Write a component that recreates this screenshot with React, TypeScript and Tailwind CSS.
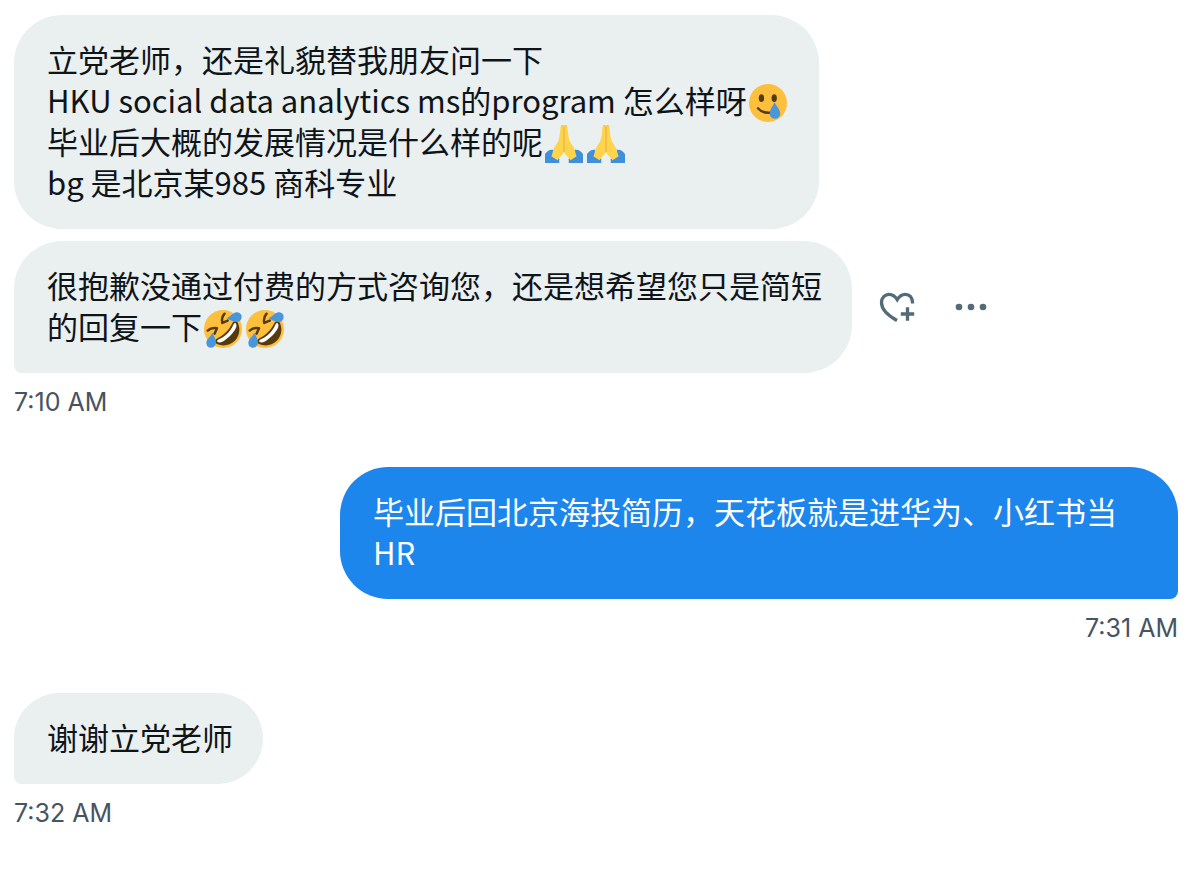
import type { ReactNode } from 'react';
import clsx from 'clsx';

// Negative block margin keeps an emoji from growing its line
const emojiClass = 'mx-[2px] -my-1 inline-block size-[38px] align-[-5px]';

// Smiling face with a tear
const TearSmile = () => (
  <svg viewBox="0 0 36 36" className={emojiClass} role="img" aria-label="🥲">
    <circle cx="18" cy="18" r="18" fill="#fdbf3c" />
    <ellipse cx="11.8" cy="13.4" rx="2.5" ry="3.6" fill="#553a10" />
    <ellipse cx="23.9" cy="13.4" rx="2.5" ry="3.6" fill="#553a10" />
    <path
      d="M8.5 23C11.500 26.500 15.500 27.800 21 27"
      fill="none"
      stroke="#553a10"
      strokeWidth="2.200"
      strokeLinecap="round"
    />
    <path
      d="M24.200 17C25.500 20.500 29.600 24 29.600 28A5 5 0 0 1 19.600 28C19.600 24 23 20.500 24.200 17Z"
      fill="#4a96dc"
    />
  </svg>
);

// Folded hands
const Hands = () => (
  <svg viewBox="0 0 36 36" className={emojiClass} role="img" aria-label="🙏">
    <path d="M0 36V27.500Q3.500 22.500 8 23.500L13.500 32.500V36Z" fill="#3f8fdc" />
    <path d="M36 36V27.500Q32.500 22.500 28 23.500L22.500 32.500V36Z" fill="#3f8fdc" />
    <path
      d="M18 1.200C17 -.3 14.900 .2 14.700 2C14.300 8 13.800 12.500 12.500 15.500L8.200 22.500C7 25 7.500 27 6 29.500L11.800 33.500C13.500 30.500 16.500 28.500 18 25.500C19.500 28.500 22.500 30.500 24.200 33.500L30 29.500C28.500 27 29 25 27.800 22.500L23.500 15.500C22.200 12.500 21.700 8 21.300 2C21.100 .2 19 -.3 18 1.200Z"
      fill="#fdd44b"
    />
    <path d="M18 2V25.500" stroke="#f2aa45" strokeWidth="1" />
    <path
      d="M16 .8h1.200M18.800 .8H20"
      stroke="#f2aa45"
      strokeWidth=".8"
      strokeLinecap="round"
    />
  </svg>
);

// Rolling on the floor laughing
const Rofl = () => (
  <svg viewBox="0 0 36 36" className={emojiClass} role="img" aria-label="🤣">
    <circle cx="18" cy="18" r="18" fill="#fdbf3c" />
    <path
      d="M10.500 31C10 28 12 27 15 25.500C19 23.500 23.500 19 25.500 15C27 12 28 10 31 10.500C34.500 15.500 34.800 23.500 29.200 29.200C23.500 34.800 15.500 34.500 10.500 31Z"
      fill="#553a10"
    />
    <path
      d="M12.500 30C12 28.500 14 27.800 16 26.800C20 24.800 24.800 20 26.800 16C27.800 14 28.500 12 30 12.500C31.500 14.500 30.500 17.500 28.500 20C26.500 23 23 26.500 20 28.500C17.500 30.500 14.500 31.500 12.500 30Z"
      fill="#fff"
    />
    <path
      d="M3.500 19.500Q7 16.200 12.300 17.300L10 22.500M19.500 3.500Q16.200 7 17.300 12.300L22.500 10"
      fill="none"
      stroke="#553a10"
      strokeWidth="2.300"
      strokeLinecap="round"
      strokeLinejoin="round"
    />
    <path
      d="M21.500 7.800C25 6.800 26.800 2.500 31 2.200C35 2.200 36.800 6 35 9C32 13.500 26.500 10.500 21.500 7.800Z"
      fill="#4a96dc"
    />
    <path
      d="M7.800 21.500C6.800 25 2.500 26.800 2.200 31C2.200 35 6 36.800 9 35C13.500 32 10.500 26.500 7.800 21.500Z"
      fill="#4a96dc"
    />
  </svg>
);

type BubbleProps = {
  children: ReactNode;
  mine?: boolean;
  // The last bubble of a group gets the squared corner
  last?: boolean;
};

const Bubble = ({ children, mine, last }: BubbleProps) => (
  <div
    className={clsx(
      'max-w-[72%] rounded-[48px] pt-[23px] pr-[30px] pb-[27px] pl-[33px] text-[31px] leading-[41px]',
      mine ? 'bg-[#1d86ed] text-white' : 'bg-[#eaeff0] text-[#0f1419]',
      last && (mine ? 'rounded-br-[8px]' : 'rounded-bl-[8px]'),
    )}
  >
    {children}
  </div>
);

const Time = ({ children }: { children: ReactNode }) => (
  <time className="mt-[13px] font-[Inter,'Liberation_Sans',sans-serif] text-[25px] leading-8 text-[#465460]">
    {children}
  </time>
);

/**
 * Direct message conversation
 */
const App = () => {
  return (
    <main className="flex flex-col gap-[49px] bg-white pt-[15px] pr-[22px] pb-11 pl-[14px] font-['Noto_Sans_CJK_SC',sans-serif]">
      <section className="flex flex-col items-start">
        <Bubble>
          <p>立党老师，还是礼貌替我朋友问一下</p>
          <p>
            HKU social data analytics ms的program 怎么样呀
            <TearSmile />
          </p>
          <p>
            毕业后大概的发展情况是什么样的呢
            <Hands />
            <Hands />
          </p>
          <p>bg 是北京某985 商科专业</p>
        </Bubble>

        <div className="mt-3 flex w-full items-center">
          <Bubble last>
            很抱歉没通过付费的方式咨询您，还是想希望您只是简短的回复一下
            <Rofl />
            <Rofl />
          </Bubble>

          {/* Message actions */}
          <div className="ml-[25px] flex shrink-0 gap-[34px] text-[#536b79]">
            <button type="button" aria-label="React to message">
              <svg viewBox="12 7 40 40" className="size-10" fill="none">
                <path
                  d="M32 40.500C22 35 16.500 28.500 16.500 22.500C16.500 17.500 20 14.300 24 14.300C27.500 14.300 30.200 16.300 32.200 19.600C34.200 16.300 37 14.300 40.300 14.300C44.500 14.300 47.600 17.500 47.600 23.500"
                  stroke="currentColor"
                  strokeWidth="3.300"
                />
                <path
                  d="M35.800 34H49.200M42.500 27.300V40.700"
                  stroke="currentColor"
                  strokeWidth="3.300"
                />
              </svg>
            </button>
            <button type="button" aria-label="More options">
              <svg viewBox="86 7 40 40" className="size-10" fill="currentColor">
                <circle cx="94" cy="27" r="3.300" />
                <circle cx="106" cy="27" r="3.300" />
                <circle cx="118" cy="27" r="3.300" />
              </svg>
            </button>
          </div>
        </div>
        <Time>7:10 AM</Time>
      </section>

      <section className="flex flex-col items-end">
        <Bubble mine last>
          毕业后回北京海投简历，天花板就是进华为、小红书当HR
        </Bubble>
        <Time>7:31 AM</Time>
      </section>

      <section className="flex flex-col items-start">
        <Bubble last>谢谢立党老师</Bubble>
        <Time>7:32 AM</Time>
      </section>
    </main>
  );
};

export default App;
